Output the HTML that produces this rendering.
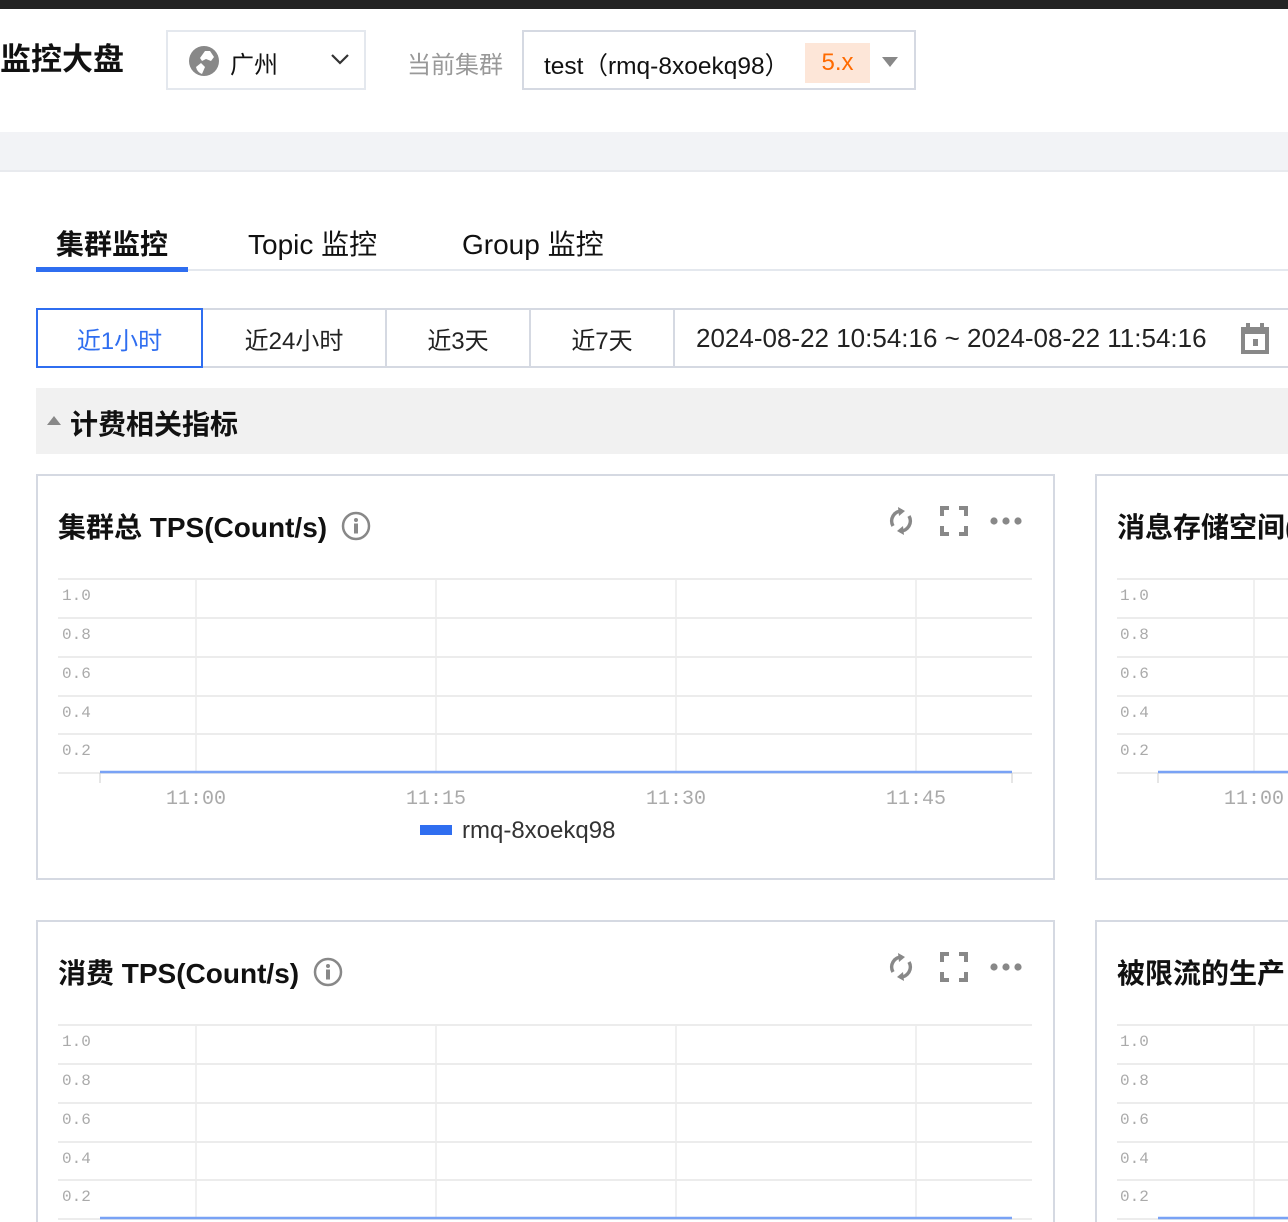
<!DOCTYPE html>
<html style="overflow:hidden;width:1288px;height:1222px"><head><meta charset="utf-8">
<style>
*{box-sizing:border-box;margin:0;padding:0}
body{width:1288px;height:1222px;overflow:hidden;background:#fff;position:relative;font-family:"Liberation Sans","Noto Sans CJK SC",sans-serif;color:#222}
.a{position:absolute}
.card{position:absolute;width:1019px;height:406px;border:2px solid #d5d9e2;background:#fff;overflow:hidden}
.ttl{position:absolute;left:20px;top:30px;font-size:28px;font-weight:bold;color:#111;white-space:nowrap;display:flex;align-items:center}
.tab{position:absolute;top:308px;height:60px;border:2px solid #d5d9e2;border-left:none;display:flex;align-items:center;justify-content:center;font-size:24px;color:#222;overflow:hidden;white-space:nowrap}
.cs{position:absolute;left:-2px;top:-2px}
</style></head><body>
<div class="a" style="left:0;top:0;width:1288px;height:9px;background:#232323"></div>
<div class="a" style="left:0;top:40px;font-size:31px;font-weight:bold;color:#111;line-height:40px">监控大盘</div>
<div class="a" style="left:166px;top:30px;width:200px;height:60px;border:2px solid #e4e8ee"></div>
<svg class="a" style="left:188px;top:45px" width="32" height="32" viewBox="0 0 32 32"><circle cx="16" cy="16" r="15" fill="#888"/><path d="M8 22 L13 18 L17 22 L14 29 Q9 27 8 22Z M17 6 L22 6 L26 12 L23 16 L18 14 L14 16 L12 13Z" fill="#fff"/></svg>
<div class="a" style="left:230px;top:45px;font-size:24px;color:#111">广州</div>
<svg class="a" style="left:330px;top:52px" width="20" height="14"><path d="M2 3 L10 11 L18 3" stroke="#333" stroke-width="2.2" fill="none"/></svg>
<div class="a" style="left:407px;top:45px;font-size:24px;color:#999">当前集群</div>
<div class="a" style="left:522px;top:30px;width:394px;height:60px;border:2px solid #d5d9e2"></div>
<div class="a" style="left:544px;top:47px;font-size:24.5px;color:#111;white-space:nowrap">test（rmq-8xoekq98）</div>
<div class="a" style="left:805px;top:43px;width:65px;height:40px;background:#fde6d8;color:#ff6a00;font-size:24px;text-align:center;line-height:40px">5.x</div>
<svg class="a" style="left:880px;top:55px" width="20" height="14"><path d="M2 2 L18 2 L10 12Z" fill="#888"/></svg>
<div class="a" style="left:0;top:132px;width:1288px;height:40px;background:#f2f3f6;border-bottom:2px solid #e8eaee"></div>

<div class="a" style="left:36px;top:269px;width:1252px;height:2px;background:#e4e8ee"></div>
<div class="a" style="left:36px;top:267px;width:152px;height:5px;background:#2f6ef0"></div>
<div class="a" style="left:56px;top:223px;font-size:28px;font-weight:bold;color:#111">集群监控</div>
<div class="a" style="left:248px;top:223px;font-size:28px;color:#111">Topic 监控</div>
<div class="a" style="left:462px;top:223px;font-size:28px;color:#111">Group 监控</div>

<div class="tab" style="left:36px;width:167px;border:2px solid #2f6ef0;color:#2f6ef0;z-index:2">近1小时</div>
<div class="tab" style="left:203px;width:184px">近24小时</div>
<div class="tab" style="left:387px;width:144px">近3天</div>
<div class="tab" style="left:531px;width:144px">近7天</div>
<div class="tab" style="left:675px;width:613px;border-right:none;justify-content:flex-start;padding-left:21px;font-size:26px">2024-08-22 10:54:16 ~ 2024-08-22 11:54:16</div>
<svg class="a" style="left:1240px;top:323px" width="30" height="32"><rect x="1" y="4" width="28" height="27" fill="#888"/><rect x="6" y="0" width="4" height="8" fill="#888"/><rect x="20" y="0" width="4" height="8" fill="#888"/><rect x="5" y="11" width="20" height="16" fill="#fff"/><rect x="13" y="16" width="5" height="7" fill="#888"/></svg>

<div class="a" style="left:36px;top:388px;width:1252px;height:66px;background:#f1f1f1"></div>
<svg class="a" style="left:46px;top:414px" width="16" height="12"><path d="M1 11 L8 2 L15 11Z" fill="#888"/></svg>
<div class="a" style="left:70px;top:403px;font-size:28px;font-weight:bold;color:#111">计费相关指标</div>

<!-- cards -->
<div class="card" style="left:36px;top:474px"><div class="ttl">集群总 TPS(Count/s)<svg style="margin-left:14px" width="30" height="30"><circle cx="15" cy="15" r="13" fill="none" stroke="#888" stroke-width="2.5"/><circle cx="15" cy="9" r="2" fill="#888"/><rect x="13" y="12.5" width="4" height="10" fill="#888"/></svg></div>
<svg class="a" style="left:846px;top:28px" width="140" height="34"><path d="M18 7 A10 10 0 0 0 9 22 M16 27 A10 10 0 0 0 25 12" stroke="#888" stroke-width="3.5" fill="none"/><path d="M14 3 L21 7 L15 12Z M20 31 L13 27 L19 22Z" fill="#888"/><path d="M58 12 V4 H65 M75 4 H82 V12 M82 22 V30 H75 M65 30 H58 V22" stroke="#888" stroke-width="4" fill="none"/><circle cx="110" cy="17" r="3.6" fill="#888"/><circle cx="122" cy="17" r="3.6" fill="#888"/><circle cx="134" cy="17" r="3.6" fill="#888"/></svg>
<svg class="cs" width="1019" height="406"><g stroke="#ececec" stroke-width="2"><line x1="22" y1="105" x2="996" y2="105"/><line x1="22" y1="144" x2="996" y2="144"/><line x1="22" y1="183" x2="996" y2="183"/><line x1="22" y1="222" x2="996" y2="222"/><line x1="22" y1="260" x2="996" y2="260"/><line x1="22" y1="299" x2="996" y2="299"/></g><g stroke="#ececec" stroke-width="1.5"><line x1="160" y1="105" x2="160" y2="299"/><line x1="400" y1="105" x2="400" y2="299"/><line x1="640" y1="105" x2="640" y2="299"/><line x1="880" y1="105" x2="880" y2="299"/></g><line x1="64" y1="298" x2="976" y2="298" stroke="#79a2f5" stroke-width="2.5"/><g stroke="#ccc"><line x1="64" y1="299" x2="64" y2="309"/><line x1="976" y1="299" x2="976" y2="309"/></g><g font-family="Liberation Mono,monospace" font-size="16" fill="#aaa"><text x="26" y="126">1.0</text><text x="26" y="165">0.8</text><text x="26" y="204">0.6</text><text x="26" y="243">0.4</text><text x="26" y="281">0.2</text></g><g font-family="Liberation Mono,monospace" font-size="20" fill="#aaa" text-anchor="middle"><text x="160" y="330">11:00</text><text x="400" y="330">11:15</text><text x="640" y="330">11:30</text><text x="880" y="330">11:45</text></g><rect x="384" y="351" width="32" height="10" fill="#2f6ef0"/><text x="426" y="364" font-family="Liberation Sans,sans-serif" font-size="24" fill="#333">rmq-8xoekq98</text></svg></div>

<div class="card" style="left:1095px;top:474px;width:193px;border-right:none"><div class="ttl">消息存储空间(Count)</div>
<svg class="cs" width="1019" height="406"><g stroke="#ececec" stroke-width="2"><line x1="22" y1="105" x2="996" y2="105"/><line x1="22" y1="144" x2="996" y2="144"/><line x1="22" y1="183" x2="996" y2="183"/><line x1="22" y1="222" x2="996" y2="222"/><line x1="22" y1="260" x2="996" y2="260"/><line x1="22" y1="299" x2="996" y2="299"/></g><line x1="159" y1="105" x2="159" y2="299" stroke="#ececec" stroke-width="1.5"/><line x1="63" y1="298" x2="976" y2="298" stroke="#79a2f5" stroke-width="2.5"/><line x1="63" y1="299" x2="63" y2="309" stroke="#ccc"/><g font-family="Liberation Mono,monospace" font-size="16" fill="#aaa"><text x="25" y="126">1.0</text><text x="25" y="165">0.8</text><text x="25" y="204">0.6</text><text x="25" y="243">0.4</text><text x="25" y="281">0.2</text></g><text x="159" y="330" font-family="Liberation Mono,monospace" font-size="20" fill="#aaa" text-anchor="middle">11:00</text></svg></div>

<div class="card" style="left:36px;top:920px;height:302px;border-bottom:none"><div class="ttl">消费 TPS(Count/s)<svg style="margin-left:14px" width="30" height="30"><circle cx="15" cy="15" r="13" fill="none" stroke="#888" stroke-width="2.5"/><circle cx="15" cy="9" r="2" fill="#888"/><rect x="13" y="12.5" width="4" height="10" fill="#888"/></svg></div>
<svg class="a" style="left:846px;top:28px" width="140" height="34"><path d="M18 7 A10 10 0 0 0 9 22 M16 27 A10 10 0 0 0 25 12" stroke="#888" stroke-width="3.5" fill="none"/><path d="M14 3 L21 7 L15 12Z M20 31 L13 27 L19 22Z" fill="#888"/><path d="M58 12 V4 H65 M75 4 H82 V12 M82 22 V30 H75 M65 30 H58 V22" stroke="#888" stroke-width="4" fill="none"/><circle cx="110" cy="17" r="3.6" fill="#888"/><circle cx="122" cy="17" r="3.6" fill="#888"/><circle cx="134" cy="17" r="3.6" fill="#888"/></svg>
<svg class="cs" width="1019" height="304"><g stroke="#ececec" stroke-width="2"><line x1="22" y1="105" x2="996" y2="105"/><line x1="22" y1="144" x2="996" y2="144"/><line x1="22" y1="183" x2="996" y2="183"/><line x1="22" y1="222" x2="996" y2="222"/><line x1="22" y1="260" x2="996" y2="260"/><line x1="22" y1="299" x2="996" y2="299"/></g><g stroke="#ececec" stroke-width="1.5"><line x1="160" y1="105" x2="160" y2="299"/><line x1="400" y1="105" x2="400" y2="299"/><line x1="640" y1="105" x2="640" y2="299"/><line x1="880" y1="105" x2="880" y2="299"/></g><line x1="64" y1="298" x2="976" y2="298" stroke="#79a2f5" stroke-width="2.5"/><g font-family="Liberation Mono,monospace" font-size="16" fill="#aaa"><text x="26" y="126">1.0</text><text x="26" y="165">0.8</text><text x="26" y="204">0.6</text><text x="26" y="243">0.4</text><text x="26" y="281">0.2</text></g></svg></div>

<div class="card" style="left:1095px;top:920px;width:193px;height:302px;border-right:none;border-bottom:none"><div class="ttl">被限流的生产 TPS</div>
<svg class="cs" width="1019" height="304"><g stroke="#ececec" stroke-width="2"><line x1="22" y1="105" x2="996" y2="105"/><line x1="22" y1="144" x2="996" y2="144"/><line x1="22" y1="183" x2="996" y2="183"/><line x1="22" y1="222" x2="996" y2="222"/><line x1="22" y1="260" x2="996" y2="260"/><line x1="22" y1="299" x2="996" y2="299"/></g><line x1="159" y1="105" x2="159" y2="299" stroke="#ececec" stroke-width="1.5"/><line x1="63" y1="298" x2="976" y2="298" stroke="#79a2f5" stroke-width="2.5"/><g font-family="Liberation Mono,monospace" font-size="16" fill="#aaa"><text x="25" y="126">1.0</text><text x="25" y="165">0.8</text><text x="25" y="204">0.6</text><text x="25" y="243">0.4</text><text x="25" y="281">0.2</text></g></svg></div>
</body></html>
